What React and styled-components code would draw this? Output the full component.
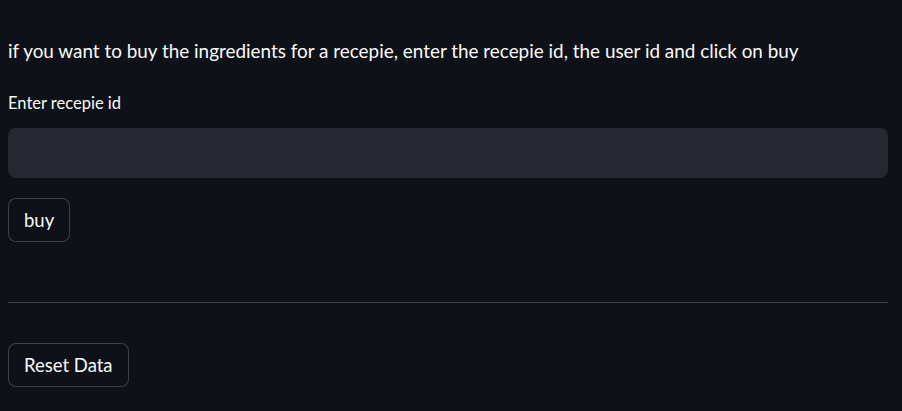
import React from "react";
import styled, { createGlobalStyle } from "styled-components";

const Global = createGlobalStyle`
  html, body { margin: 0; padding: 0; background: #0e1117; }
  body { font-family: Lato, "Noto Sans", sans-serif; color: #fafafa; }
`;

const Main = styled.main`
  width: 880px;
  margin-left: 8px;
  padding-top: 38px;
  display: flex;
  flex-direction: column;
`;

const Text = styled.p`
  margin: 0;
  font-size: 18.9px;
  line-height: 26px;
`;

const Field = styled.div`
  margin-top: 29px;
  display: flex;
  flex-direction: column;
`;

const Label = styled.label`
  font-size: 16.5px;
  line-height: 20px;
  margin-bottom: 15px;
`;

const Input = styled.input`
  height: 50px;
  box-sizing: border-box;
  border: none;
  border-radius: 8px;
  background: #262730;
  color: #fafafa;
  padding: 0 14px;
  font: inherit;
  outline: none;
`;

const Button = styled.button`
  align-self: flex-start;
  margin-top: ${(p) => p.$top}px;
  height: ${(p) => p.$h}px;
  padding: 0 15px;
  box-sizing: border-box;
  background: #0e1117;
  border: 1px solid rgba(250, 250, 250, 0.2);
  border-radius: 8px;
  color: #fafafa;
  font-family: inherit;
  font-size: 18.5px;
`;

const Divider = styled.hr`
  margin: 60px 0 0;
  border: none;
  border-top: 1px solid rgba(250, 250, 250, 0.2);
  width: 100%;
`;

export default function App() {
  return (
    <>
      <Global />
      <Main>
        <Text>
          if you want to buy the ingredients for a recepie, enter the recepie id, the user id and click on buy
        </Text>
        <Field>
          <Label>Enter recepie id</Label>
          <Input type="text" />
        </Field>
        <Button $top={20} $h={44}>buy</Button>
        <Divider />
        <Button $top={40} $h={44}>Reset Data</Button>
      </Main>
    </>
  );
}
